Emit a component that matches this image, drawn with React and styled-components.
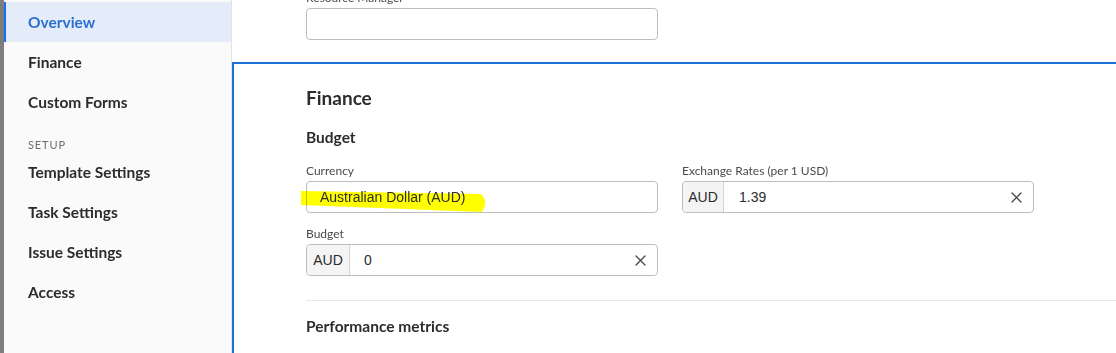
import React from "react";
import styled, { createGlobalStyle } from "styled-components";

const GlobalStyle = createGlobalStyle`
  html, body {
    margin: 0;
    padding: 0;
    overflow: hidden;
    background: #ffffff;
  }
  body {
    font-family: Lato, "Noto Sans", sans-serif;
    color: #2c2c2c;
  }
`;

const Page = styled.div`
  display: flex;
  width: 1116px;
  height: 353px;
  overflow: hidden;
`;

const Edge = styled.div`
  width: 4px;
  flex: none;
  background: #7d7d7d;
`;

const Sidebar = styled.nav`
  width: 227px;
  flex: none;
  background: #fafafa;
  border-right: 1px solid #e4e4e4;
  padding-top: 2px;
  display: flex;
  flex-direction: column;
`;

const NavItem = styled.div`
  height: 40px;
  display: flex;
  align-items: center;
  padding-left: ${(p) => (p.$active ? "22px" : "24px")};
  border-left: ${(p) => (p.$active ? "2px solid #1473e6" : "none")};
  background: ${(p) => (p.$active ? "#e3ecf8" : "transparent")};
  color: ${(p) => (p.$active ? "#2c6fd1" : "#2c2c2c")};
  font-size: 15.5px;
  font-weight: 700;
`;

const NavHeading = styled.div`
  height: 16px;
  padding: 14px 0 0 24px;
  font-size: 11px;
  letter-spacing: 0.08em;
  color: #6e6e6e;
  display: flex;
  align-items: center;
`;

const Main = styled.main`
  flex: 1;
  display: flex;
  flex-direction: column;
  min-width: 0;
`;

const TopBlock = styled.div`
  margin-top: -10px;
  padding-left: 74px;
  height: 72px;
`;

const Section = styled.section`
  border-top: 2px solid #1f72d8;
  border-left: 2px solid #1f72d8;
  margin-right: -40px;
  padding: 22px 0 0 72px;
  flex: 1;
`;

const Title = styled.h2`
  margin: 0;
  font-size: 19px;
  font-weight: 700;
  line-height: 24px;
  color: #2c2c2c;
`;

const SubTitle = styled.h3`
  margin: 17px 0 0;
  font-size: 15.5px;
  font-weight: 700;
  line-height: 20px;
  color: #2c2c2c;
`;

const Grid = styled.div`
  display: grid;
  grid-template-columns: 352px 352px;
  column-gap: 24px;
  row-gap: 13px;
  margin-top: 16px;
`;

const Field = styled.div`
  display: flex;
  flex-direction: column;
`;

const Label = styled.label`
  font-size: 12px;
  line-height: 16px;
  height: 18px;
  color: #4b4b4b;
`;

const Box = styled.div`
  position: relative;
  height: 30px;
  border: 1px solid #bdbdbd;
  border-radius: 4px;
  background: #fff;
  display: flex;
  align-items: center;
  font-family: "Liberation Sans", Arial, sans-serif;
  font-size: 14px;
  color: #2c2c2c;
`;

const Prefix = styled.span`
  height: 100%;
  width: ${(p) => p.$w || 40}px;
  flex: none;
  background: #f4f4f4;
  border-right: 1px solid #d3d3d3;
  border-radius: 4px 0 0 4px;
  display: flex;
  align-items: center;
  justify-content: center;
`;

const Value = styled.span`
  flex: 1;
  padding-left: ${(p) => p.$pad || 15}px;
  position: relative;
`;

const Clear = styled.button`
  border: 0;
  background: none;
  width: 34px;
  height: 100%;
  display: flex;
  align-items: center;
  justify-content: center;
  padding: 0;
  color: #4b4b4b;
`;

const Highlight = styled.svg`
  position: absolute;
  left: -8px;
  top: 7px;
  width: 192px;
  height: 26px;
  pointer-events: none;
  mix-blend-mode: multiply;
`;

const Divider = styled.hr`
  margin: 24px 0 0;
  border: 0;
  border-top: 1px solid #e6e6e6;
`;

const Metrics = styled.h3`
  margin: 15px 0 0;
  font-size: 15.5px;
  font-weight: 700;
  line-height: 20px;
  color: #2c2c2c;
`;

const Cross = () => (
  <svg width="11" height="11" viewBox="0 0 11 11">
    <path d="M1 1L10 10M10 1L1 10" stroke="currentColor" strokeWidth="1.4" strokeLinecap="round" />
  </svg>
);

const nav = [
  { label: "Overview", active: true },
  { label: "Finance" },
  { label: "Custom Forms" },
  { heading: "SETUP" },
  { label: "Template Settings" },
  { label: "Task Settings" },
  { label: "Issue Settings" },
  { label: "Access" },
];

export default function App() {
  return (
    <>
      <GlobalStyle />
      <Page>
        <Edge />
        <Sidebar>
          {nav.map((n) =>
            n.heading ? (
              <NavHeading key={n.heading}>{n.heading}</NavHeading>
            ) : (
              <NavItem key={n.label} $active={n.active}>
                {n.label}
              </NavItem>
            )
          )}
        </Sidebar>
        <Main>
          <TopBlock>
            <Field style={{ width: 352 }}>
              <Label>Resource Manager</Label>
              <Box />
            </Field>
          </TopBlock>
          <Section>
            <Title>Finance</Title>
            <SubTitle>Budget</SubTitle>
            <Grid>
              <Field>
                <Label>Currency</Label>
                <Box>
                  <Highlight viewBox="0 0 192 26">
                    <path d="M2 2 L182 5 Q190 13 183 23 L2 16 Z" fill="#ffff00" />
                  </Highlight>
                  <Value $pad={13}>Australian Dollar (AUD)</Value>
                </Box>
              </Field>
              <Field>
                <Label>Exchange Rates (per 1 USD)</Label>
                <Box>
                  <Prefix $w={40}>AUD</Prefix>
                  <Value>1.39</Value>
                  <Clear><Cross /></Clear>
                </Box>
              </Field>
              <Field>
                <Label>Budget</Label>
                <Box>
                  <Prefix $w={42}>AUD</Prefix>
                  <Value $pad={14}>0</Value>
                  <Clear><Cross /></Clear>
                </Box>
              </Field>
            </Grid>
            <Divider />
            <Metrics>Performance metrics</Metrics>
          </Section>
        </Main>
      </Page>
    </>
  );
}
